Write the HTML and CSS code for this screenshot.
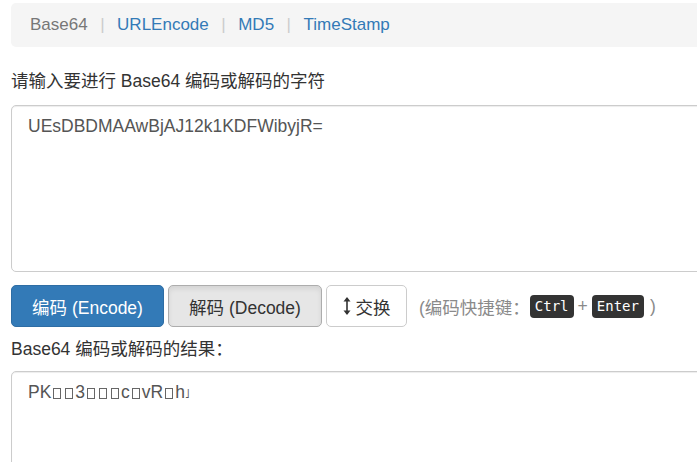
FILE: index.html
```html
<!DOCTYPE html>
<html lang="zh-CN">
<head>
<meta charset="utf-8">
<title>Base64</title>
<link rel="stylesheet" href="styles.css">
</head>
<body>
<div class="page">
  <nav class="crumbs">
    <span class="crumb active">Base64</span>
    <span class="sep">|</span>
    <a class="crumb" href="#">URLEncode</a>
    <span class="sep">|</span>
    <a class="crumb" href="#">MD5</a>
    <span class="sep">|</span>
    <a class="crumb" href="#">TimeStamp</a>
  </nav>

  <label class="label">请输入要进行 Base64 编码或解码的字符</label>
  <div class="area area-in">UEsDBDMAAwBjAJ12k1KDFWibyjR=</div>

  <div class="actions">
    <button class="btn btn-primary">编码 (Encode)</button>
    <button class="btn btn-active">解码 (Decode)</button>
    <button class="btn btn-default"><svg class="ico" width="8" height="20" viewBox="0 0 8 20"><path d="M4 2 V18" stroke="#333" stroke-width="1.6" fill="none"/><path d="M0.5 5.5 L4 1 L7.5 5.5 Z" fill="#333"/><path d="M0.5 14.5 L4 19 L7.5 14.5 Z" fill="#333"/></svg>交换</button>
    <span class="hint">(编码快捷键：<kbd class="k1">Ctrl</kbd>+<kbd class="k2">Enter</kbd>)</span>
  </div>

  <label class="label label-res">Base64 编码或解码的结果：</label>
  <div class="area area-out">PK<span class="tofu"></span><span class="tofu"></span>3<span class="tofu"></span><span class="tofu"></span><span class="tofu"></span>c<span class="tofu"></span>vR<span class="tofu"></span>h<span class="small">˩</span></div>
</div>
</body>
</html>
```

FILE: styles.css
```css
html, body {
  margin: 0;
  padding: 0;
  overflow: hidden;
  background: #fff;
}

body {
  font-family: "Liberation Sans", Arial, "Noto Sans CJK SC", sans-serif;
  font-size: 17.5px;
  color: #333;
}

.page {
  width: 760px;
  padding: 3px 0 0 11px;
  display: flex;
  flex-direction: column;
}

.crumbs {
  background: #f5f5f5;
  border-radius: 5px;
  height: 44px;
  padding: 0 19px;
  display: flex;
  align-items: center;
  gap: 12.5px;
  font-size: 17px;
}

.crumb {
  color: #337ab7;
  text-decoration: none;
}

.crumb.active {
  color: #777;
}

.sep {
  color: #ccc;
}

.label {
  display: block;
  margin-top: 22px;
  line-height: 24px;
  height: 24px;
}

.area {
  border: 1px solid #ccc;
  border-radius: 5px;
  box-shadow: inset 0 1px 1px rgba(0, 0, 0, 0.075);
  padding: 8px 16px;
  line-height: 24px;
  color: #555;
  box-sizing: border-box;
}

.area-in {
  margin-top: 12px;
  height: 167px;
}

.actions {
  display: flex;
  align-items: center;
  margin-top: 13px;
  gap: 4px;
}

.btn {
  font-family: inherit;
  font-size: 17.5px;
  height: 42px;
  border-radius: 5px;
  border: 1px solid #ccc;
  padding: 0 20px;
  display: inline-flex;
  align-items: center;
  justify-content: center;
  box-sizing: border-box;
  color: #333;
  background: #fff;
}

.btn-primary {
  width: 153px;
  background: #337ab7;
  border-color: #2e6da4;
  color: #fff;
}

.btn-active {
  width: 154px;
  background: #e6e6e6;
  border-color: #adadad;
  box-shadow: inset 0 3px 5px rgba(0, 0, 0, 0.08);
}

.btn-default {
  width: 81px;
  padding: 0;
  gap: 5px;
}

.ico {
  display: block;
}

.hint {
  margin-left: 8px;
  color: #8a8a8a;
  display: inline-flex;
  align-items: center;
  white-space: pre;
}

kbd {
  display: inline-block;
  background: #333;
  color: #fff;
  font-family: "DejaVu Sans Mono", "Liberation Mono", monospace;
  font-size: 14px;
  line-height: 23px;
  padding: 0 5px;
  border-radius: 4px;
}

.k1 {
  margin: 0 4px 0 0;
}

.k2 {
  margin: 0 6px 0 4px;
}

.label-res {
  margin-top: 10px;
}

.area-out {
  margin-top: 10px;
  height: 140px;
}

.tofu {
  display: inline-block;
  width: 8px;
  height: 11px;
  border: 1px solid #666;
  margin: 0 2px;
  vertical-align: -1px;
  box-sizing: border-box;
}

.small {
  font-size: 12px;
}
```
